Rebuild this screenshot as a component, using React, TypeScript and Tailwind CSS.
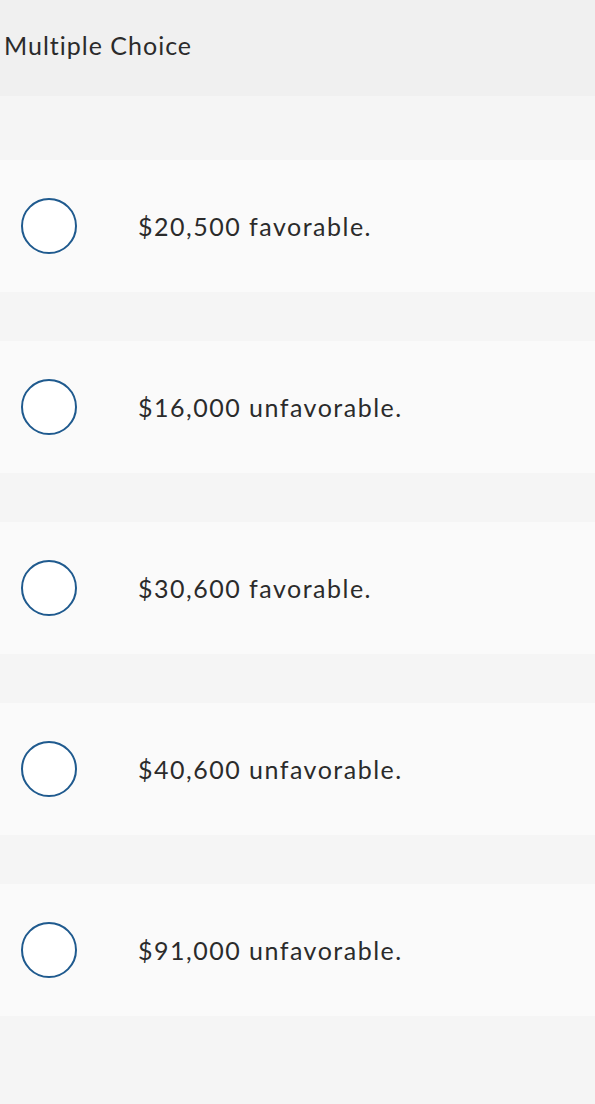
import React from "react";

const options = [
  "$20,500 favorable.",
  "$16,000 unfavorable.",
  "$30,600 favorable.",
  "$40,600 unfavorable.",
  "$91,000 unfavorable.",
];

export default function App() {
  return (
    <div className="min-h-[1104px] w-[595px] bg-[#f5f5f5] font-['Lato',sans-serif] text-[#2b2b2b]">
      <div className="h-[96px] bg-[#f0f0f0] pl-[4px] pt-[29px] text-[25px] leading-[32px] tracking-[1px]">
        Multiple Choice
      </div>
      <div className="flex flex-col gap-[49px] pt-[64px]">
        {options.map((o) => (
          <div key={o} className="flex h-[132px] items-center bg-[#fafafa] pl-[21px]">
            <div className="h-[56px] w-[56px] shrink-0 rounded-full border-2 border-[#1f5a8e] bg-white" />
            <div className="ml-[61px] text-[25px] leading-[32px] tracking-[1.5px]">{o}</div>
          </div>
        ))}
      </div>
    </div>
  );
}
